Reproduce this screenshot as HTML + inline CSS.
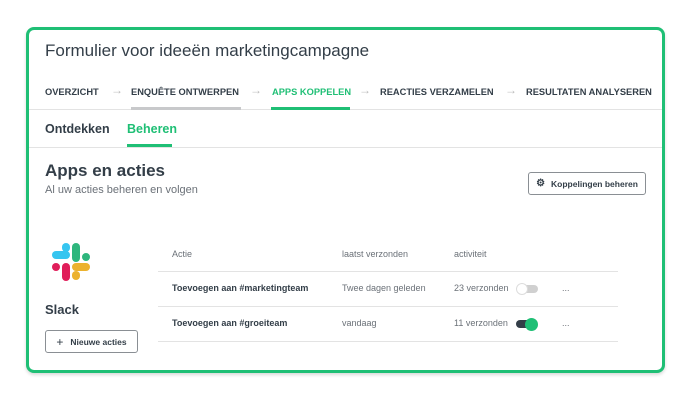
<!DOCTYPE html>
<html><head><meta charset="utf-8"><style>
*{margin:0;padding:0;box-sizing:border-box}
body{width:691px;height:400px;background:#fff;font-family:"Liberation Sans",sans-serif;position:relative;overflow:hidden;color:#333e48}
.card{position:absolute;left:26px;top:27px;width:639px;height:346px;border:3px solid #1fbf75;border-radius:8px;background:#fff;box-shadow:0 2px 3px rgba(0,0,0,.15)}
.a{position:absolute;white-space:nowrap}
.nav{font-size:9.3px;font-weight:bold;top:87px}
.arr{color:#bbb;font-size:12px;top:83px}
.hl{position:absolute;height:1px;background:#e3e3e3}
.btn{position:absolute;border:1px solid #8a8f94;border-radius:3px;background:#fff;font-size:8.5px;font-weight:bold;color:#333e48;display:flex;align-items:center;justify-content:center}
.th{font-size:9px;color:#6b7178;top:249px}
.td{font-size:9px;color:#6b7178}
.tb{font-size:9px;font-weight:bold;color:#333e48}
.p{position:absolute;border-radius:4px}
</style></head><body>
<div class="card"></div>
<div class="a" style="left:45px;top:41px;font-size:17px;color:#333e48">Formulier voor ideeën marketingcampagne</div>
<div class="a nav" style="left:45px">OVERZICHT</div>
<div class="a arr" style="left:111px">→</div>
<div class="a nav" style="left:131px">ENQUÊTE ONTWERPEN</div>
<div class="a arr" style="left:250px">→</div>
<div class="a nav" style="left:272px;color:#1fbf75">APPS KOPPELEN</div>
<div class="a arr" style="left:359px">→</div>
<div class="a nav" style="left:380px">REACTIES VERZAMELEN</div>
<div class="a arr" style="left:505px">→</div>
<div class="a nav" style="left:526px">RESULTATEN ANALYSEREN</div>
<div class="hl" style="left:29px;top:109px;width:633px"></div>
<div class="a" style="left:131px;top:107px;width:110px;height:3px;background:#c8c9cb"></div>
<div class="a" style="left:271px;top:107px;width:79px;height:3px;background:#1fbf75"></div>
<div class="a" style="left:45px;top:122px;font-size:12.5px;font-weight:bold">Ontdekken</div>
<div class="a" style="left:127px;top:122px;font-size:12.5px;font-weight:bold;color:#1fbf75">Beheren</div>
<div class="a" style="left:127px;top:144px;width:45px;height:3px;background:#1fbf75"></div>
<div class="hl" style="left:29px;top:147px;width:633px"></div>
<div class="a" style="left:45px;top:161px;font-size:17px;font-weight:bold">Apps en acties</div>
<div class="a" style="left:45px;top:184px;font-size:11px;color:#6b7178">Al uw acties beheren en volgen</div>
<div class="btn" style="left:528px;top:172px;width:118px;height:23px"><span style="font-size:10px;margin-right:6px">⚙</span>Koppelingen beheren</div>
<div class="p" style="left:52px;top:251px;width:18px;height:8px;background:#36c5f0"></div>
<div class="p" style="left:62px;top:243px;width:8px;height:9px;background:#36c5f0"></div>
<div class="p" style="left:72px;top:243px;width:8px;height:19px;background:#2eb67d"></div>
<div class="p" style="left:82px;top:253px;width:8px;height:8px;background:#2eb67d"></div>
<div class="p" style="left:72px;top:263px;width:18px;height:8px;background:#ecb22e"></div>
<div class="p" style="left:72px;top:271px;width:8px;height:9px;background:#ecb22e"></div>
<div class="p" style="left:62px;top:263px;width:8px;height:18px;background:#e01e5a"></div>
<div class="p" style="left:52px;top:263px;width:8px;height:8px;background:#e01e5a"></div>
<div class="a" style="left:45px;top:302px;font-size:13px;font-weight:bold">Slack</div>
<div class="btn" style="left:45px;top:330px;width:93px;height:23px"><span style="font-size:12px;font-weight:normal;margin-right:7px">+</span>Nieuwe acties</div>
<div class="a th" style="left:172px">Actie</div>
<div class="a th" style="left:342px">laatst verzonden</div>
<div class="a th" style="left:454px">activiteit</div>
<div class="hl" style="left:158px;top:271px;width:460px"></div>
<div class="hl" style="left:158px;top:306px;width:460px"></div>
<div class="hl" style="left:158px;top:341px;width:460px"></div>
<div class="a tb" style="left:172px;top:283px">Toevoegen aan #marketingteam</div>
<div class="a td" style="left:342px;top:283px">Twee dagen geleden</div>
<div class="a td" style="left:454px;top:283px">23 verzonden</div>
<div class="a" style="left:517px;top:285px;width:21px;height:8px;border-radius:4px;background:#d0d0d0"></div>
<div class="a" style="left:516px;top:283px;width:12px;height:12px;border-radius:50%;background:#fff;border:1px solid #ddd"></div>
<div class="a td" style="left:562px;top:283px">...</div>
<div class="a tb" style="left:172px;top:318px">Toevoegen aan #groeiteam</div>
<div class="a td" style="left:342px;top:318px">vandaag</div>
<div class="a td" style="left:454px;top:318px">11 verzonden</div>
<div class="a" style="left:516px;top:320px;width:21px;height:8px;border-radius:4px;background:#333e48"></div>
<div class="a" style="left:525px;top:318px;width:13px;height:13px;border-radius:50%;background:#1fbf75"></div>
<div class="a td" style="left:562px;top:318px">...</div>
</body></html>
